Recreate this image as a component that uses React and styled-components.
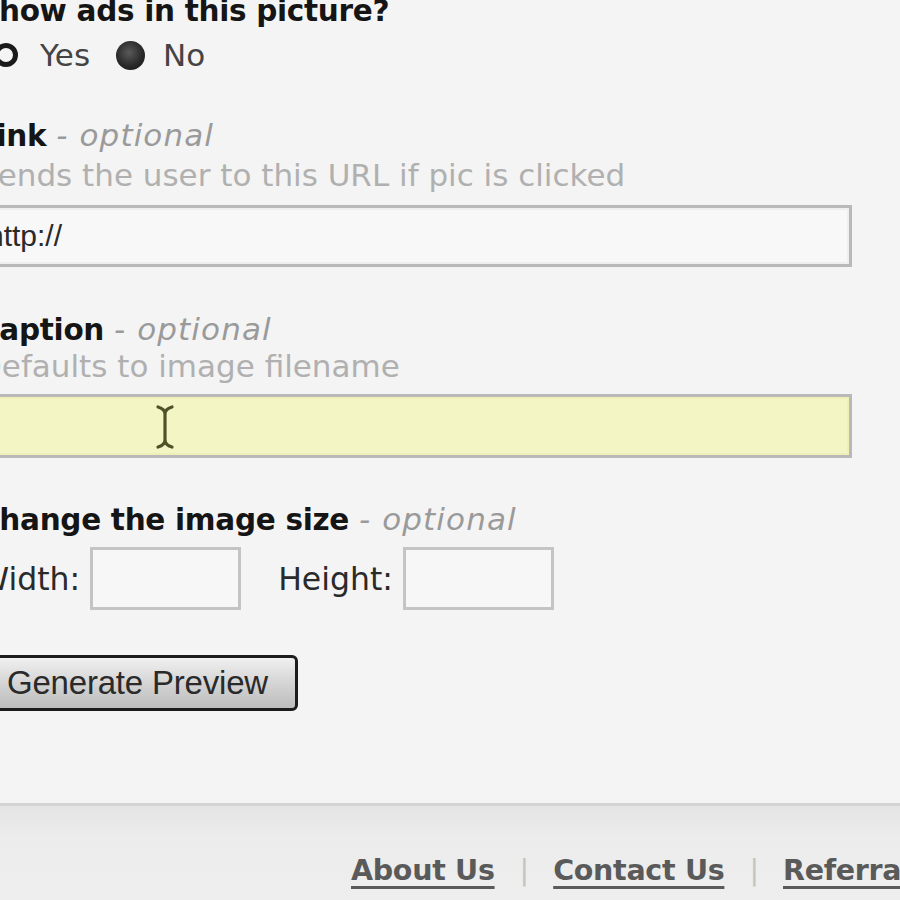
import React from "react";
import styled, { createGlobalStyle } from "styled-components";

const Global = createGlobalStyle`
  html, body { margin: 0; padding: 0; background: #f4f4f4; overflow: hidden; }
  body { width: 900px; height: 900px; }
`;

const Page = styled.div`
  width: 900px;
  height: 900px;
  display: flex;
  flex-direction: column;
  background: #f4f4f4;
  overflow: hidden;
`;

const Form = styled.div`
  margin-left: -22px;
  margin-top: -7px;
  width: 874px;
  height: 810px;
  flex-shrink: 0;
  display: flex;
  flex-direction: column;
  font-family: "DejaVu Sans", Verdana, sans-serif;
  font-size: 31px;
  color: #1a1a1a;
`;

const Label = styled.div`
  font-weight: bold;
  font-size: 29.5px;
  line-height: 36px;
  margin-top: ${(p) => p.$top || 0}px;
  color: #151515;
  letter-spacing: -0.3px;
  white-space: nowrap;
`;

const Optional = styled.span`
  font-weight: normal;
  font-style: italic;
  font-size: 31px;
  letter-spacing: 1.1px;
  color: #9a9a9a;
`;

const Help = styled.div`
  color: #b0b0b0;
  line-height: 36px;
  margin-top: ${(p) => p.$top ?? 3}px;
  white-space: nowrap;
`;

const RadioRow = styled.div`
  display: flex;
  align-items: center;
  height: 40px;
  margin-top: 6px;
  color: #444;
`;

const Radio = styled.span`
  flex-shrink: 0;
  width: 24px;
  height: 24px;
  border-radius: 50%;
  box-sizing: border-box;
  border: 5px solid #1a1a1a;
  background: #f4f4f4;
  margin-right: ${(p) => p.$gap}px;
  margin-left: ${(p) => p.$left || 0}px;
`;

const RadioOn = styled.span`
  flex-shrink: 0;
  width: 29px;
  height: 29px;
  border-radius: 50%;
  background: radial-gradient(circle at 45% 40%, #5a5a5a 0, #2a2a2a 55%, #111 100%);
  margin-right: ${(p) => p.$gap}px;
  margin-left: ${(p) => p.$left || 0}px;
`;

const TextInput = styled.div`
  margin-top: ${(p) => p.$top || 0}px;
  height: ${(p) => p.$h || 62}px;
  flex-shrink: 0;
  box-sizing: border-box;
  border: 3px solid #b9b9b9;
  background: ${(p) => (p.$focus ? "#f3f5c4" : "#f8f8f8")};
  box-shadow: inset 0 0 0 2px ${(p) => (p.$focus ? "#eef0b8" : "#efefef")};
  display: flex;
  align-items: center;
  padding-left: 6px;
  font-family: "Liberation Sans", Arial, sans-serif;
  font-size: 30px;
  color: #2a2a2a;
  position: relative;
`;

const Cursor = styled.svg`
  position: absolute;
  left: 175px;
  top: 8px;
`;

const SizeRow = styled.div`
  display: flex;
  align-items: center;
  margin-top: 9px;
  color: #2a2a2a;
  font-size: 31.5px;
`;

const SmallBox = styled.div`
  flex-shrink: 0;
  width: 151px;
  height: 63px;
  box-sizing: border-box;
  border: 3px solid #c4c4c4;
  background: #f7f7f7;
  margin-left: ${(p) => p.$left}px;
  margin-right: ${(p) => p.$right || 0}px;
`;

const Button = styled.div`
  align-self: flex-start;
  flex-shrink: 0;
  margin-top: 45px;
  margin-left: 6px;
  width: 314px;
  height: 56px;
  box-sizing: border-box;
  border: 3px solid #1c1c1c;
  border-radius: 6px;
  background: linear-gradient(#f0f0f0, #d2d2d2 55%, #bdbdbd);
  display: flex;
  align-items: center;
  padding-left: 20px;
  font-family: "Liberation Sans", Arial, sans-serif;
  font-size: 33px;
  color: #2a2a2a;
  letter-spacing: -0.2px;
`;

const Footer = styled.div`
  flex: 1;
  border-top: 3px solid #d3d3d3;
  background: linear-gradient(#e4e4e4, #ececec 30px, #eeeeee);
  display: flex;
  align-items: flex-start;
  padding-top: 48px;
  padding-left: 351px;
  font-family: "DejaVu Sans", Verdana, sans-serif;
  font-size: 28.5px;
  font-weight: bold;
  white-space: nowrap;
`;

const FootLink = styled.a`
  color: #5a5a5a;
  text-decoration: underline;
  text-decoration-thickness: 3px;
  text-underline-offset: 6px;
  letter-spacing: -0.3px;
`;

const Sep = styled.span`
  color: #c4c4c4;
  font-weight: normal;
  margin: 0 24px 0 25px;
`;

export default function App() {
  return (
    <Page>
      <Global />
      <Form>
        <Label>Show ads in this picture?</Label>
        <RadioRow>
          <Radio $left={16} $gap={22} />
          Yes
          <RadioOn $left={26} $gap={18} />
          No
        </RadioRow>
        <Label $top={42}>
          Link <Optional>- optional</Optional>
        </Label>
        <Help>Sends the user to this URL if pic is clicked</Help>
        <TextInput $top={12}>http://</TextInput>
        <Label $top={44}>
          Caption <Optional>- optional</Optional>
        </Label>
        <Help $top={0}>Defaults to image filename</Help>
        <TextInput $top={10} $h={64} $focus>
          <Cursor width="18" height="44" viewBox="0 0 18 44">
            <path
              d="M2 2 Q9 4 9 9 L9 35 Q9 40 2 42 M16 2 Q9 4 9 9 M9 35 Q9 40 16 42"
              fill="none"
              stroke="#4f5228"
              strokeWidth="3.2"
              strokeLinecap="round"
            />
          </Cursor>
        </TextInput>
        <Label $top={43}>
          Change the image size <Optional>- optional</Optional>
        </Label>
        <SizeRow>
          Width:
          <SmallBox $left={10} $right={37} />
          Height:
          <SmallBox $left={10} />
        </SizeRow>
        <Button>Generate Preview</Button>
      </Form>
      <Footer>
        <FootLink>About Us</FootLink>
        <Sep>|</Sep>
        <FootLink>Contact Us</FootLink>
        <Sep>|</Sep>
        <FootLink>Referral Program</FootLink>
      </Footer>
    </Page>
  );
}
